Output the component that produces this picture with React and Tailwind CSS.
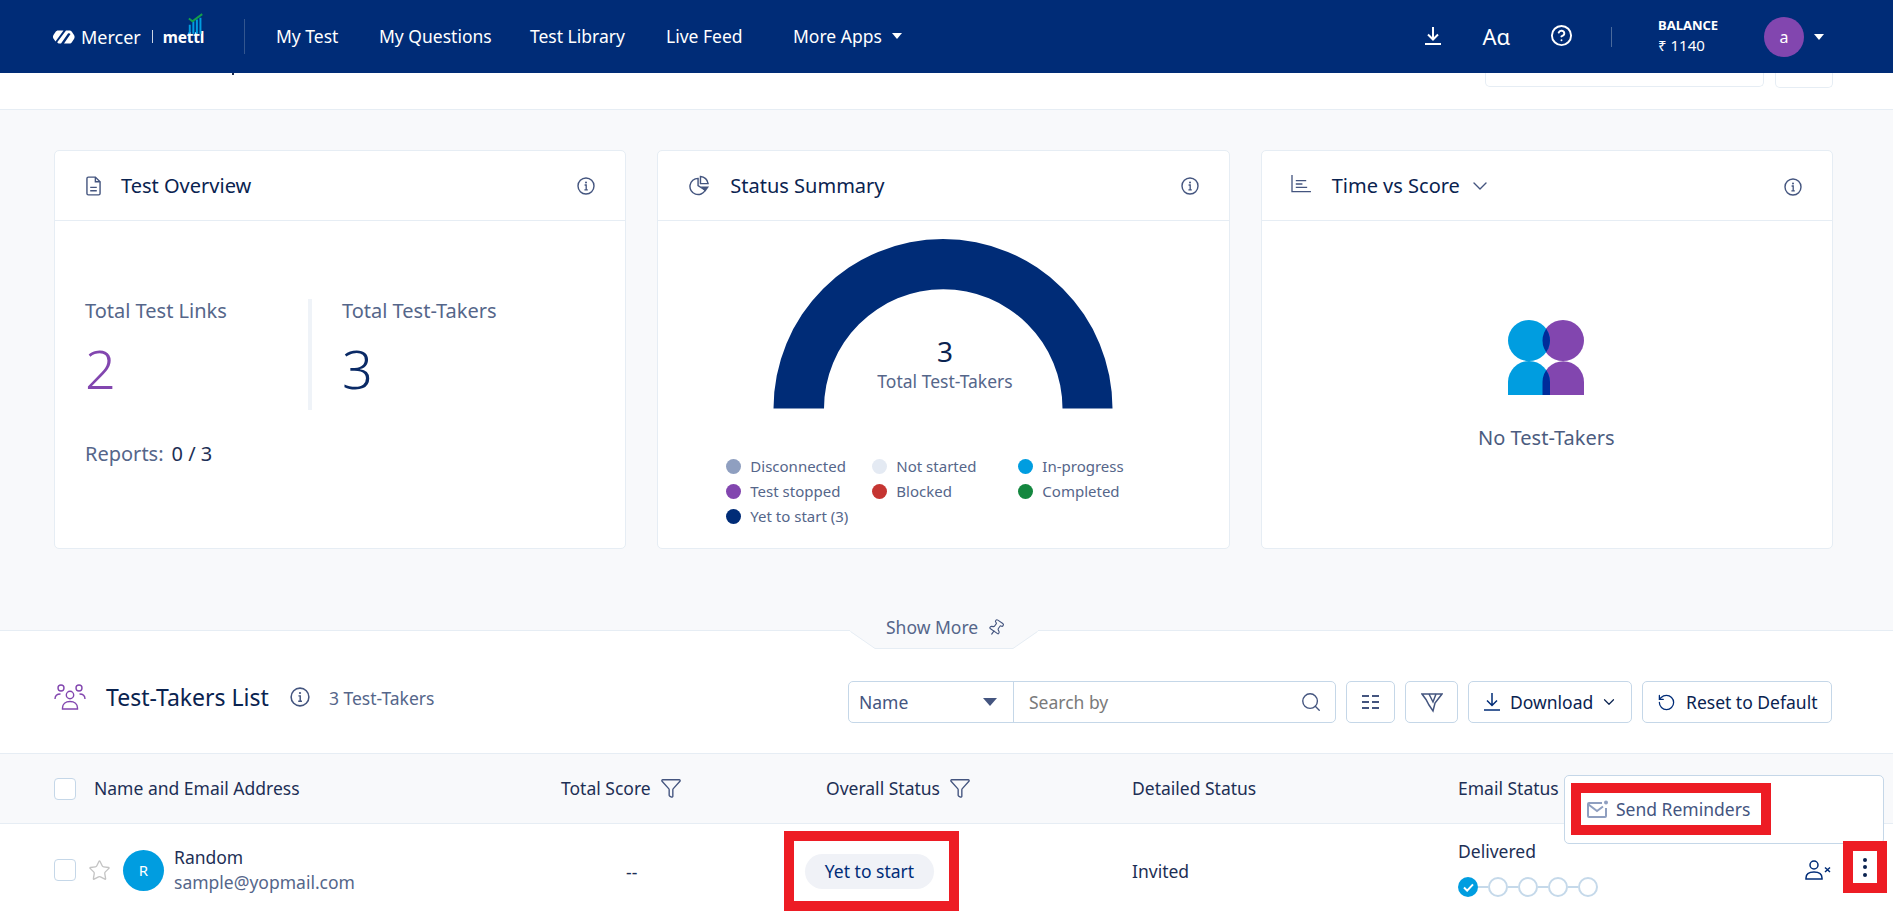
import { ChevronDown, CircleHelp, Funnel, Pin, RotateCcw, Search, Star } from 'lucide-react';

const legend = [
  { label: 'Disconnected', dot: 'bg-[#8f9fc0]' },
  { label: 'Not started', dot: 'bg-[#e4eaf3]' },
  { label: 'In-progress', dot: 'bg-[#009de0]' },
  { label: 'Test stopped', dot: 'bg-[#8246af]' },
  { label: 'Blocked', dot: 'bg-[#c53532]' },
  { label: 'Completed', dot: 'bg-[#14873f]' },
  { label: 'Yet to start (3)', dot: 'bg-[#002c77]' },
];

function InfoIcon({ className = '' }) {
  return (
    <svg viewBox="0 0 18 18" className={`w-[18px] h-[18px] shrink-0 ${className}`} fill="none" stroke="#44557f">
      <circle cx="9" cy="9" r="8" strokeWidth="1.4" />
      <circle cx="9" cy="5.4" r="1" fill="#44557f" stroke="none" />
      <path d="M7.6 8h1.6v4.6M7.4 12.8h3.400" strokeWidth="1.3" />
    </svg>
  );
}

function DownloadIcon({ className = '', color = '#fff', width = 2 }) {
  return (
    <svg viewBox="0 0 16 18" className={`w-[16px] h-[18px] shrink-0 ${className}`} fill="none" stroke={color} strokeWidth={width}>
      <path d="M8 0v12M3 7.500l5 5 5-5M0 17h16" />
    </svg>
  );
}

function CardHeader({ icon, title, iconWidth, children, infoClass }) {
  return (
    <div className="h-[70px] border-b border-[#e6edf4] flex items-center pl-[31px] pr-[30px] shrink-0">
      <div className={`${iconWidth} shrink-0`}>{icon}</div>
      <span className="text-[20px] text-[#0a2350] whitespace-nowrap">{title}</span>
      {children}
      <InfoIcon className={`ml-auto ${infoClass || ''}`} />
    </div>
  );
}

function Card({ children }) {
  return <div className="flex-1 h-[399px] bg-white border border-[#e6edf4] rounded-[5px] flex flex-col">{children}</div>;
}

function Logo() {
  return (
    <div className="flex items-center w-[191px] pl-[54px] box-content -ml-px">
      <svg viewBox="0 0 22 14" className="w-[22px] h-[14px] shrink-0" fill="#fff">
        <path d="M5 0.500h5.500L2.500 11.500 0.800 9C-0.300 7.500-0.300 6 0.800 4.500L2.500 2C3.300 1 4 0.500 5 0.500Z" />
        <path d="M13 0.500h3.500c1 0 1.800 0.500 2.500 1.500l2 3c0.800 1.300 0.800 2.700 0 4l-2 3c-0.700 1-1.500 1.500-2.500 1.500H11l6.500-9.500C17 3.500 16 3 15 3.500L8 13.500H6.500c-1 0-1.800-0.500-2.300-1.300Z" />
      </svg>
      <span className="text-[18px] text-white ml-[6px] leading-none">Mercer</span>
      <span className="w-px h-[13px] bg-white/80 ml-[11px] mr-[10px]" />
      <div className="relative">
        <span className="text-[15.500px] font-bold text-white leading-none tracking-[-0.2px]">mettl</span>
        <svg viewBox="0 0 18 24" className="absolute right-0 top-[-14px] w-[16px] h-[24px]">
          <path d="M2 14V24M6 10V24M10 8V24M14 6V24" stroke="#009de0" strokeWidth="2.200" />
          <path d="M1 7l4 3 11-8" stroke="#14a04a" strokeWidth="2.200" fill="none" />
        </svg>
      </div>
    </div>
  );
}

function Header() {
  return (
    <header className="h-[73px] bg-[#002c77] flex items-center text-white shrink-0 relative z-10">
      <Logo />
      <span className="w-px h-[35px] bg-[#33568f]" />
      <nav className="flex items-center text-[17.500px] ml-[31px] -mt-[1px]">
        <span className="w-[103px]">My Test</span>
        <span className="w-[151px]">My Questions</span>
        <span className="w-[136px]">Test Library</span>
        <span className="w-[127px]">Live Feed</span>
        <span>More Apps</span>
        <span className="ml-[10px] w-0 h-0 border-x-[5px] border-x-transparent border-t-[6px] border-t-white" />
      </nav>
      <div className="ml-auto flex items-center pr-[69px]">
        <DownloadIcon className="mr-[41px] -mt-[2px]" />
        <span className="text-[22px] leading-none mr-[40px] -mt-[1px]">Aɑ</span>
        <CircleHelp size={23} strokeWidth={2} className="mr-[38px] -mt-[2px]" />
        <span className="w-px h-[20px] bg-[#4a6a9c] mr-[46px]" />
        <div className="w-[106px] leading-[20px] -mt-[4px]">
          <div className="text-[13px] font-bold">BALANCE</div>
          <div className="text-[15px]">₹ 1140</div>
        </div>
        <div className="w-10 h-10 rounded-full bg-[#8246af] flex items-center justify-center text-[16px]">a</div>
        <span className="ml-[10px] w-0 h-0 border-x-[5.500px] border-x-transparent border-t-[6px] border-t-white" />
      </div>
    </header>
  );
}

function SubHeader() {
  return (
    <div className="h-[37px] bg-white border-b border-[#e6edf4] flex justify-end gap-[11px] pr-[60px] shrink-0 relative">
      <span className="absolute left-[232px] top-0 w-[2px] h-[2px] bg-[#1a2b50]" />
      <div className="w-[279px] h-[14px] border border-t-0 border-[#e6edf4] rounded-b-[5px]" />
      <div className="w-[58px] h-[15px] border border-t-0 border-[#e6edf4] rounded-b-[5px]" />
    </div>
  );
}

function OverviewCard() {
  return (
    <Card>
      <CardHeader
        title="Test Overview"
        iconWidth="w-[35px]"
        icon={
          <svg viewBox="0 0 16 21" className="w-[15px] h-[20px]" fill="none" stroke="#44557f" strokeWidth="1.5">
            <path d="M1 2.500A1.500 1.500 0 0 1 2.500 1H10l5 5v12.500a1.500 1.500 0 0 1-1.500 1.500h-11A1.500 1.500 0 0 1 1 18.500Z" />
            <path d="M10 1v5h5M4.500 12h7M4.500 15.500h7" />
          </svg>
        }
      />
      <div className="pl-[30px] pt-[78px]">
        <div className="flex h-[111px]">
          <div className="w-[223px]">
            <div className="text-[20px] text-[#55668a] leading-[24px]">Total Test Links</div>
            <div className="text-[54px] font-light text-[#8246af] leading-[60px] mt-[15px]">2</div>
          </div>
          <div className="w-[4px] bg-[#eff3f8]" />
          <div className="pl-[30px]">
            <div className="text-[20px] text-[#55668a] leading-[24px]">Total Test-Takers</div>
            <div className="text-[54px] font-light text-[#0a2a66] leading-[60px] mt-[15px]">3</div>
          </div>
        </div>
        <div className="mt-[32px] text-[20px] leading-[24px] text-[#55668a]">
          Reports:<span className="text-[#1d2f55] ml-[8px]">0 / 3</span>
        </div>
      </div>
    </Card>
  );
}

function StatusCard() {
  return (
    <Card>
      <CardHeader
        title="Status Summary"
        iconWidth="w-[41px]"
        icon={
          <svg viewBox="0 0 22 22" className="w-[21px] h-[21px]" fill="none" stroke="#44557f" strokeWidth="1.500">
            <path d="M9.500 3.500A8.500 8.500 0 1 0 17 16L9.500 11Z" />
            <path d="M12 1.500A8.500 8.500 0 0 1 20 9h-8Z" />
            <path d="M12.500 12h8.500l-4 5.500Z" fill="#44557f" stroke="none" />
          </svg>
        }
      />
      <div className="relative h-[188px] flex flex-col items-center shrink-0">
        <svg viewBox="0 0 340 170" className="absolute left-[115px] top-[18px] w-[340px] h-[170px]">
          <path d="M0.500 169.500A169.500 169.500 0 0 1 339.500 169.500H289.500A119 119 0 0 0 51 169.500Z" fill="#002c77" />
        </svg>
        <div className="relative mt-[112px] ml-[3px] text-[28px] leading-[36px] text-[#0a2350]">3</div>
        <div className="relative ml-[3px] text-[17.500px] leading-[24px] text-[#55668a]">Total Test-Takers</div>
      </div>
      <div className="grid grid-cols-[146px_146px_146px] auto-rows-[25px] pl-[68px] pt-[45px]">
        {legend.map((item) => (
          <div key={item.label} className="flex items-center text-[15px] text-[#55668a] whitespace-nowrap">
            <span className={`w-[15px] h-[15px] rounded-full ${item.dot} mr-[9px] shrink-0`} />
            {item.label}
          </div>
        ))}
      </div>
    </Card>
  );
}

function TimeCard() {
  return (
    <Card>
      <CardHeader
        title="Time vs Score"
        iconWidth="w-[39px]"
        infoClass="mt-[3px]"
        icon={
          <svg viewBox="0 0 21 19" className="w-[20px] h-[18px] -mt-[3px] -ml-[2px]" fill="none" stroke="#44557f" strokeWidth="1.400">
            <path d="M1 0v17.500h20M5 6h11M5 9.500h7M5 13h12" />
          </svg>
        }
      >
        <ChevronDown size={24} strokeWidth={1.4} color="#44557f" className="ml-[8px]" />
      </CardHeader>
      <div className="flex flex-col items-center pt-[99px]">
        <svg viewBox="0 0 76 75" className="w-[76px] h-[75px] -ml-[1px]">
          <defs>
            <clipPath id="purple-side">
              <path d="M55 0a20.500 20.500 0 1 1 0 41a20.500 20.500 0 1 1 0-41ZM34.500 75V62A20.500 20.500 0 0 1 76 62V75Z" />
            </clipPath>
          </defs>
          <ellipse cx="55" cy="20.500" rx="21" ry="20.500" fill="#8246af" />
          <path d="M34.500 75V62A20.500 20.500 0 0 1 76 62V75Z" fill="#8246af" />
          <ellipse cx="21" cy="20.500" rx="21" ry="20.500" fill="#009de0" />
          <path d="M0 75V62A21 21 0 0 1 42 62V75Z" fill="#009de0" />
          <g clipPath="url(#purple-side)">
            <ellipse cx="21" cy="20.500" rx="21" ry="20.500" fill="#002c9a" />
            <path d="M0 75V62A21 21 0 0 1 42 62V75Z" fill="#002c9a" />
          </g>
        </svg>
        <div className="mt-[31px] -ml-[1px] text-[20px] leading-[24px] text-[#4c5c80]">No Test-Takers</div>
      </div>
    </Card>
  );
}

function ShowMore() {
  return (
    <div className="absolute left-[850px] top-[-15px] w-[188px] h-[33px]">
      <svg viewBox="0 0 188 33" className="absolute inset-0 w-[188px] h-[33px]">
        <path d="M0 15.500L25 32.500H163L188 15.500V0H0Z" fill="#f8f9fb" />
        <path d="M0.500 15.500L25 32.500H163L187.500 15.500" fill="none" stroke="#e6edf4" />
      </svg>
      <div className="relative flex items-center h-[24px] pl-[36px] text-[17.500px] text-[#55668a] leading-none">
        Show More
        <Pin size={18} strokeWidth={1.5} color="#44557f" className="ml-[9px] rotate-[35deg]" />
      </div>
    </div>
  );
}

function UsersIcon() {
  return (
    <svg viewBox="0 0 32 26" className="w-[32px] h-[26px]" fill="none" stroke="#8246af" strokeWidth="1.400">
      <circle cx="7" cy="4" r="3" />
      <circle cx="25" cy="4" r="3" />
      <circle cx="16" cy="11" r="3.700" />
      <path d="M1 15c0-3 2-5 5.500-5M31 15c0-3-2-5-5.500-5M8.500 25v-1c0-4 3-6.500 7.500-6.500s7.500 2.500 7.500 6.500v1Z" />
    </svg>
  );
}

function Toolbar() {
  return (
    <div className="h-[122px] bg-white flex items-center pl-[54px] pr-[61px] pt-[20px] shrink-0 relative">
      <ShowMore />
      <div className="flex items-center -mt-[10px]">
        <UsersIcon />
        <span className="ml-[20px] text-[23px] text-[#0a2350]">Test-Takers List</span>
        <InfoIcon className="ml-[21px] w-[20px] h-[20px]" />
        <span className="ml-[19px] mt-[2px] text-[17.500px] text-[#55668a]">3 Test-Takers</span>
      </div>
      <div className="ml-auto flex items-center h-[42px] gap-[10px]">
        <div className="w-[488px] h-full flex border border-[#c5d7e8] rounded-[5px]">
          <div className="w-[165px] flex items-center justify-between pl-[10px] pr-[16px] border-r border-[#c5d7e8] text-[17.500px] text-[#44557f]">
            Name
            <span className="w-0 h-0 border-x-[7px] border-x-transparent border-t-[8px] border-t-[#44557f]" />
          </div>
          <div className="flex-1 flex items-center justify-between pl-[15px] pr-[13px] text-[17.500px] text-[#7a7a7a]">
            Search by
            <Search size={22} strokeWidth={1.5} color="#44557f" />
          </div>
        </div>
        <button className="w-[49px] h-full border border-[#c5d7e8] rounded-[5px] flex items-center justify-center">
          <svg viewBox="0 0 20 16" className="w-[20px] h-[16px]" stroke="#44557f" strokeWidth="2">
            <path d="M1 2h8M11 2h8M1 8h8M11 8h8M1 14h8M11 14h8" strokeDasharray="7 1" />
          </svg>
        </button>
        <button className="w-[53px] h-full border border-[#c5d7e8] rounded-[5px] flex items-center justify-center">
          <svg viewBox="0 0 22 22" className="w-[22px] h-[22px]" fill="none" stroke="#44557f" strokeWidth="1.500">
            <path d="M1 3h20l-7 9-2 8-4-6-3-5.500Z" />
            <path d="M8 3l4 8 3-8" />
          </svg>
        </button>
        <button className="w-[164px] h-full border border-[#c5d7e8] rounded-[5px] flex items-center pl-[15px] text-[17.500px] text-[#0a2350]">
          <DownloadIcon color="#002c77" width={1.500} />
          <span className="ml-[10px]">Download</span>
          <ChevronDown size={18} strokeWidth={1.6} className="ml-[7px]" />
        </button>
        <button className="w-[190px] h-full border border-[#c5d7e8] rounded-[5px] flex items-center pl-[14px] text-[17.500px] text-[#0a2350]">
          <RotateCcw size={19} strokeWidth={1.6} color="#002c77" />
          <span className="ml-[10px] whitespace-nowrap">Reset to Default</span>
        </button>
      </div>
    </div>
  );
}

function Checkbox() {
  return <span className="w-[22px] h-[22px] rounded-[4px] border border-[#c5d7e8] bg-white shrink-0" />;
}

function TableHead() {
  return (
    <div className="h-[71px] bg-[#f8f9fb] border-y border-[#e6edf4] flex items-center text-[17.500px] text-[#1d2f55] pl-[54px] shrink-0">
      <div className="w-[507px] flex items-center">
        <Checkbox />
        <span className="ml-[18px]">Name and Email Address</span>
      </div>
      <div className="w-[265px] flex items-center">
        Total Score
        <Funnel size={22} strokeWidth={1.5} color="#44557f" className="ml-[9px] -mt-[2px]" />
      </div>
      <div className="w-[306px] flex items-center">
        Overall Status
        <Funnel size={22} strokeWidth={1.5} color="#44557f" className="ml-[9px] -mt-[2px]" />
      </div>
      <div className="w-[326px]">Detailed Status</div>
      <div>Email Status</div>
    </div>
  );
}

function EmailSteps() {
  return (
    <div className="flex items-center mt-[14px]">
      <span className="w-5 h-5 rounded-full bg-[#009de0] flex items-center justify-center shrink-0">
        <svg viewBox="0 0 12 10" className="w-[11px] h-[9px]" fill="none" stroke="#fff" strokeWidth="2.200">
          <path d="M1 5l3.500 3.500L11 1.500" />
        </svg>
      </span>
      {[1, 2, 3, 4].map((n) => (
        <div key={n} className="flex items-center">
          <span className="w-[10px] h-[2px] bg-[#c5d9ea]" />
          <span className="w-5 h-5 rounded-full border-2 border-[#c5d9ea]" />
        </div>
      ))}
    </div>
  );
}

function TableRow() {
  return (
    <div className="flex-1 bg-white flex items-start text-[17.500px] text-[#1d2f55] pl-[54px] relative">
      <div className="w-[507px] h-[50px] mt-[21px] flex items-center">
        <Checkbox />
        <Star size={23} strokeWidth={1.4} color="#c4c4c4" className="ml-[12px]" />
        <span className="ml-[12px] w-[41px] h-[41px] rounded-full bg-[#009de0] text-white text-[15px] flex items-center justify-center shrink-0">R</span>
        <div className="ml-[10px] leading-[25px]">
          <div>Random</div>
          <div className="text-[#55668a]">sample@yopmail.com</div>
        </div>
      </div>
      <div className="w-[223px] pl-[65px] pt-[36px] leading-[24px]">--</div>
      <div className="w-[348px] pt-[7px]">
        {/* red review box around the status pill */}
        <div className="w-[175px] h-[80px] border-[10px] border-[#ed1c24] flex items-center justify-center pr-[4px]">
          <span className="inline-flex items-center justify-center w-[129px] h-[35px] rounded-full bg-[#f0f2f7] text-[#002c77]">Yet to start</span>
        </div>
      </div>
      <div className="w-[326px] pt-[35px] leading-[24px]">Invited</div>
      <div className="pt-[15px] leading-[24px]">
        Delivered
        <EmailSteps />
      </div>
      <svg viewBox="0 0 26 20" className="absolute left-[1805px] top-[36px] w-[26px] h-[20px]" fill="none" stroke="#002c77" strokeWidth="1.500">
        <circle cx="9" cy="5" r="4" />
        <path d="M1 19v-1c0-4 3.500-6 8-6s8 2 8 6v1Z" />
        <path d="M20 7.500l5 4.500M25 7.500L20 12" />
      </svg>
    </div>
  );
}

function RowMenu() {
  return (
    <>
      <div className="absolute left-[1564px] top-[775px] w-[320px] h-[69px] bg-white border border-[#c5d7e8] rounded-[5px] pl-[6px] pt-[7px]">
        <div className="w-[200px] h-[52px] border-[10px] border-[#ed1c24] flex items-center pl-[6px] text-[17.500px] text-[#44557f] whitespace-nowrap">
          <svg viewBox="0 0 21 19" className="w-[21px] h-[19px] mr-[8px] shrink-0" fill="none" stroke="#8f9fc0" strokeWidth="2">
            <path d="M15 3H2a1 1 0 0 0-1 1v12a1 1 0 0 0 1 1h16a1 1 0 0 0 1-1V8M1.500 4.500 10 11l6-4.500" />
            <circle cx="19" cy="2.500" r="2" fill="#8f9fc0" stroke="none" />
          </svg>
          Send Reminders
        </div>
      </div>
      <div className="absolute left-[1843px] top-[841px] w-[44px] h-[52px] border-[10px] border-[#ed1c24] bg-white flex flex-col items-center justify-center gap-[3.500px]">
        <span className="w-1 h-1 rounded-full bg-[#0a2350]" />
        <span className="w-1 h-1 rounded-full bg-[#0a2350]" />
        <span className="w-1 h-1 rounded-full bg-[#0a2350]" />
      </div>
    </>
  );
}

export default function App() {
  return (
    <div className="relative h-[916px] overflow-hidden flex flex-col bg-white font-['Noto_Sans',sans-serif]">
      <Header />
      <SubHeader />
      <main className="h-[521px] bg-[#f8f9fb] border-b border-[#e6edf4] flex gap-[31px] pl-[54px] pr-[60px] pt-[40px] shrink-0">
        <OverviewCard />
        <StatusCard />
        <TimeCard />
      </main>
      <Toolbar />
      <TableHead />
      <TableRow />
      <RowMenu />
    </div>
  );
}
